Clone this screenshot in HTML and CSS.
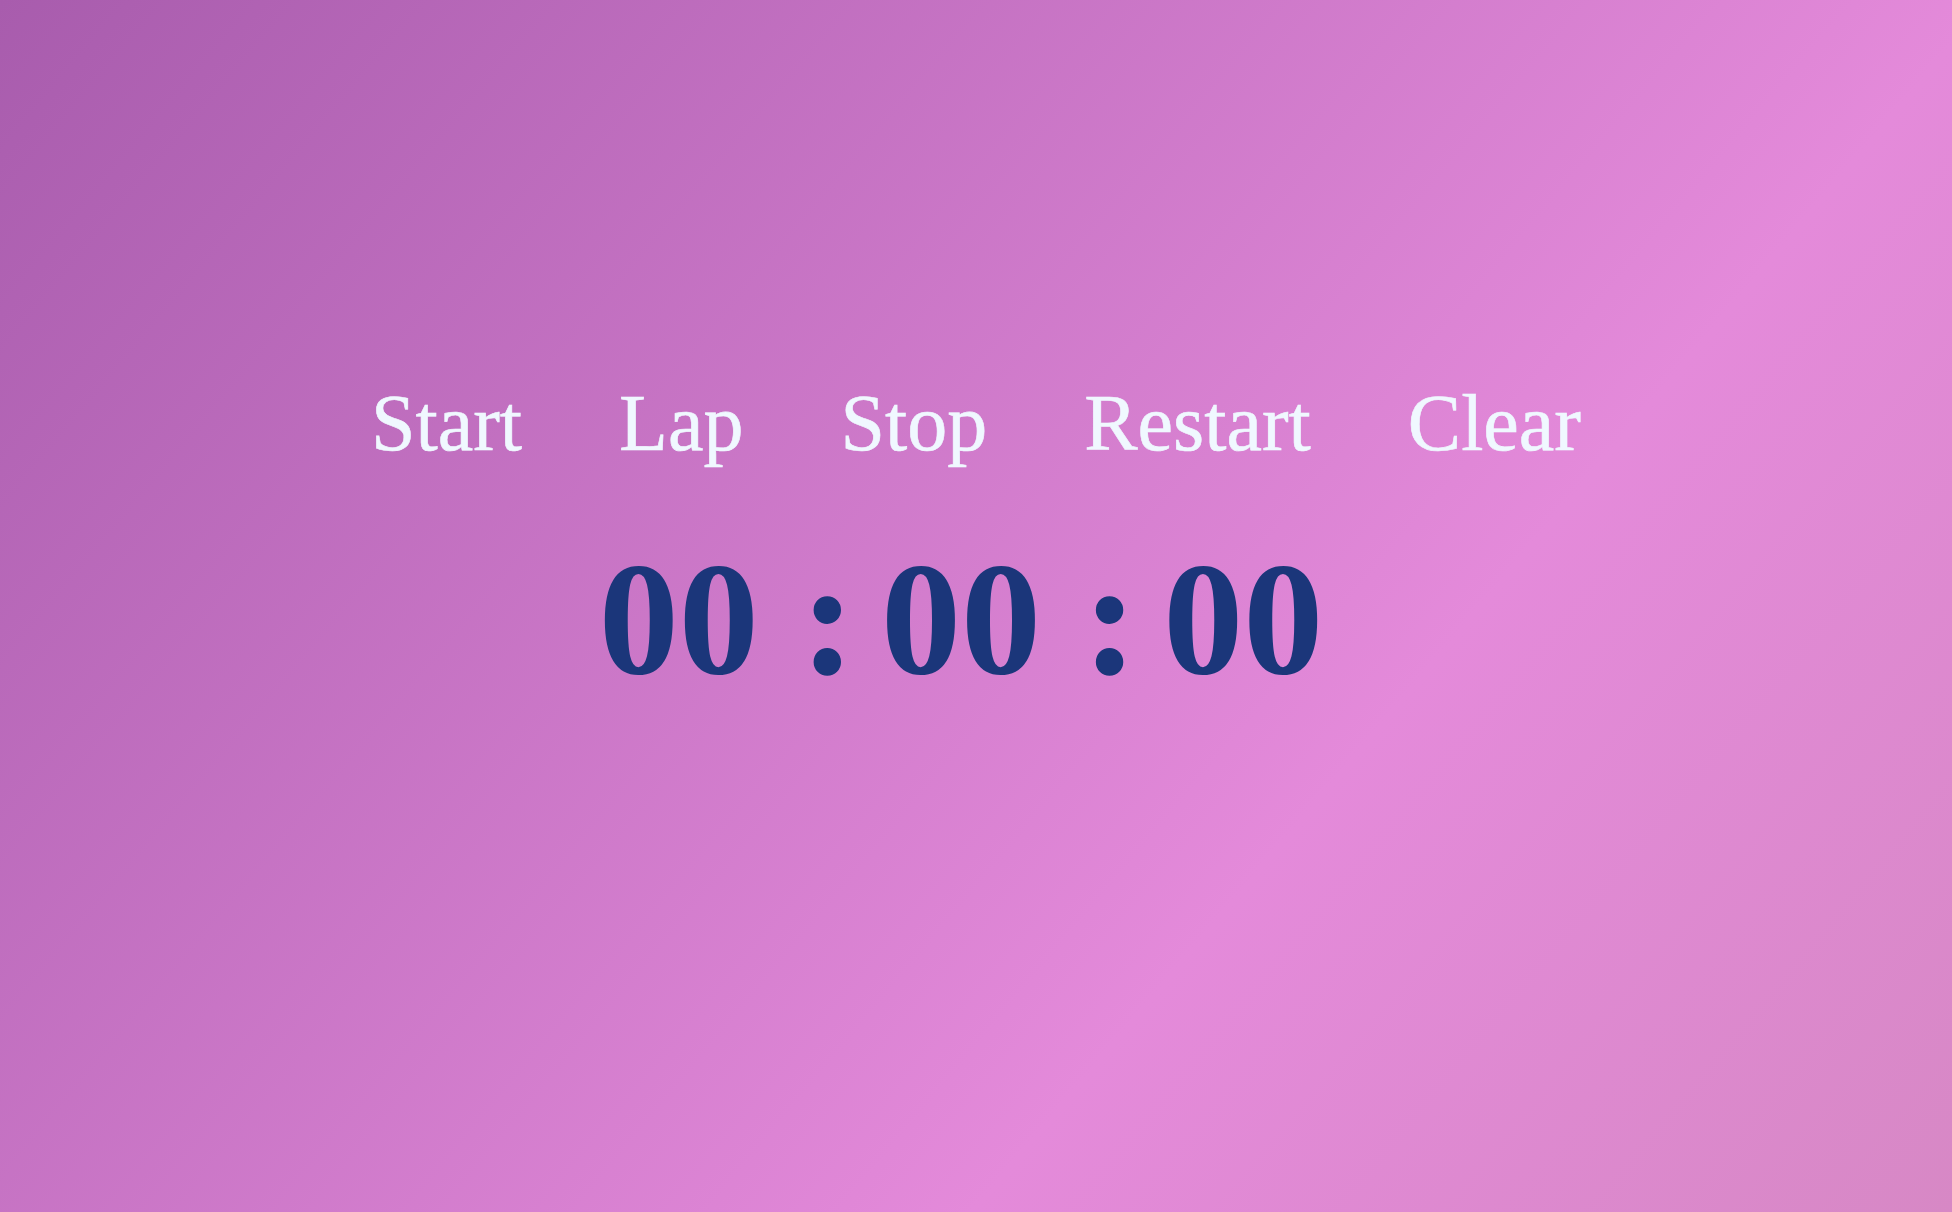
FILE: index.html
```html
<!DOCTYPE html>
<html lang="en">
<head>
<meta charset="utf-8">
<title>Stopwatch</title>
<link rel="stylesheet" href="styles.css">
</head>
<body>
<main class="app">
  <div class="controls">
    <button class="btn" type="button">Start</button>
    <button class="btn" type="button">Lap</button>
    <button class="btn" type="button">Stop</button>
    <button class="btn" type="button">Restart</button>
    <button class="btn" type="button">Clear</button>
  </div>
  <div class="timer"><span class="seg">00</span> <span class="sep">:</span> <span class="seg">00</span> <span class="sep">:</span> <span class="seg">00</span></div>
</main>
</body>
</html>
```

FILE: styles.css
```css
html, body {
  margin: 0;
  padding: 0;
  height: 100%;
}
body {
  background: linear-gradient(130deg, #a85cad 0%, #e48ada 67%, #d788c5 100%);
  font-family: "Liberation Serif", "Times New Roman", serif;
}
.app {
  box-sizing: border-box;
  min-height: 100vh;
  padding-top: 377px;
  display: flex;
  flex-direction: column;
  align-items: center;
}
.controls {
  display: flex;
  justify-content: center;
  gap: 97px;
}
.btn {
  font-family: inherit;
  font-size: 80px;
  line-height: 92px;
  color: #f0f8ff;
  -webkit-text-stroke: 0.6px #f0f8ff;
  background: none;
  border: none;
  padding: 0;
  margin: 0;
  cursor: pointer;
}
.timer {
  margin-top: 58px;
  padding-right: 30px;
  font-size: 160px;
  line-height: 184px;
  font-weight: bold;
  color: #1b367a;
  text-align: center;
  white-space: nowrap;
  word-spacing: -5.5px;
}
.sep {
  margin-left: 8px;
  margin-right: -8px;
  -webkit-text-stroke: 1.5px #1b367a;
}
```
